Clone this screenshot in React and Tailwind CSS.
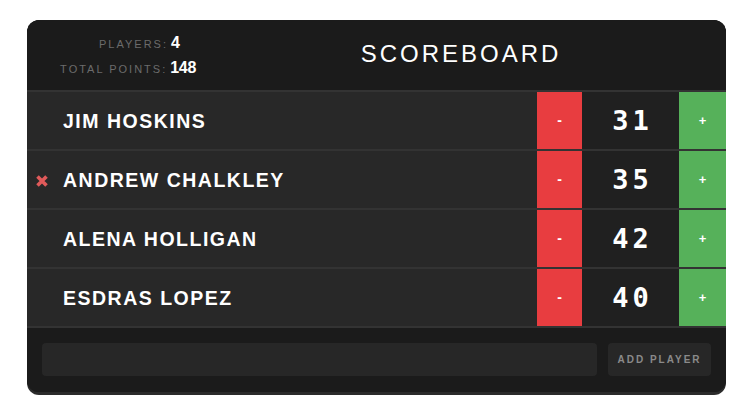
import React from "react";

const players = [
  { name: "Jim Hoskins", score: 31, x: false },
  { name: "Andrew Chalkley", score: 35, x: true },
  { name: "Alena Holligan", score: 42, x: false },
  { name: "Esdras Lopez", score: 40, x: false },
];

function XIcon() {
  return (
    <svg width="12" height="12" viewBox="0 0 12 12">
      <path d="M1.5 1.5 L10.5 10.5 M10.5 1.5 L1.5 10.5" stroke="#e05a5a" strokeWidth="3.6" strokeLinecap="butt" />
    </svg>
  );
}

export default function App() {
  return (
    <div className="w-[756px] h-[414px] bg-white pt-[20px] pl-[27px]" style={{ fontFamily: '"Liberation Sans", Arial, sans-serif' }}>
      <div className="w-[699px] rounded-[12px] bg-[#2b2b2b] pb-[3px] overflow-hidden">
        <div className="rounded-[12px] overflow-hidden bg-[#1b1b1b]">
          {/* header */}
          <div className="flex h-[70px] items-center bg-[#1b1b1b]">
            <div className="w-[169px] flex flex-col gap-[1px] pt-[1px]">
              <div className="flex items-baseline">
                <span className="w-[141px] text-right text-[11px] tracking-[2px] text-[#6b6b6b] uppercase">Players:</span>
                <span className="pl-[3px] text-[16px] font-bold text-white tracking-[-0.3px]">4</span>
              </div>
              <div className="flex items-baseline">
                <span className="w-[141px] text-right text-[11px] tracking-[2px] text-[#6b6b6b] uppercase">Total Points:</span>
                <span className="pl-[3px] text-[16px] font-bold text-white tracking-[-0.3px]">148</span>
              </div>
            </div>
            <div className="flex-1 text-center text-white text-[24px] tracking-[3px] pb-[3px]">SCOREBOARD</div>
          </div>
          {/* rows */}
          {players.map((p) => (
            <div key={p.name} className="flex h-[59px] border-t-2 border-[#333333] bg-[#282828]">
              <div className="flex-1 flex items-center pl-[9px] pt-[3px]">
                <div className="w-[12px] flex items-center justify-center">{p.x ? <XIcon /> : null}</div>
                <div className="pl-[15px] text-white font-bold text-[19.5px] tracking-[1.5px] uppercase">{p.name}</div>
              </div>
              <div className="w-[45px] bg-[#e83d40] flex items-center justify-center text-white text-[14px] font-bold">-</div>
              <div className="w-[97px] bg-[#202020] flex items-center justify-center text-white text-[27px] font-bold tracking-[4px] pl-[4px] pt-[2px]" style={{ fontFamily: '"DejaVu Sans Mono", monospace' }}>
                {p.score}
              </div>
              <div className="w-[47px] bg-[#56b15a] flex items-center justify-center text-white text-[13px] font-bold">+</div>
            </div>
          ))}
          {/* footer */}
          <div className="border-t-2 border-[#333333] bg-[#1b1b1b] flex gap-[11px] px-[15px] pt-[15px] pb-[16px]">
            <div className="flex-1 h-[33px] rounded-[4px] bg-[#272727]"></div>
            <div className="w-[103px] h-[33px] rounded-[4px] bg-[#272727] flex items-center justify-center text-[10px] font-bold tracking-[2px] text-[#8a8a8a]">ADD PLAYER</div>
          </div>
        </div>
      </div>
    </div>
  );
}
